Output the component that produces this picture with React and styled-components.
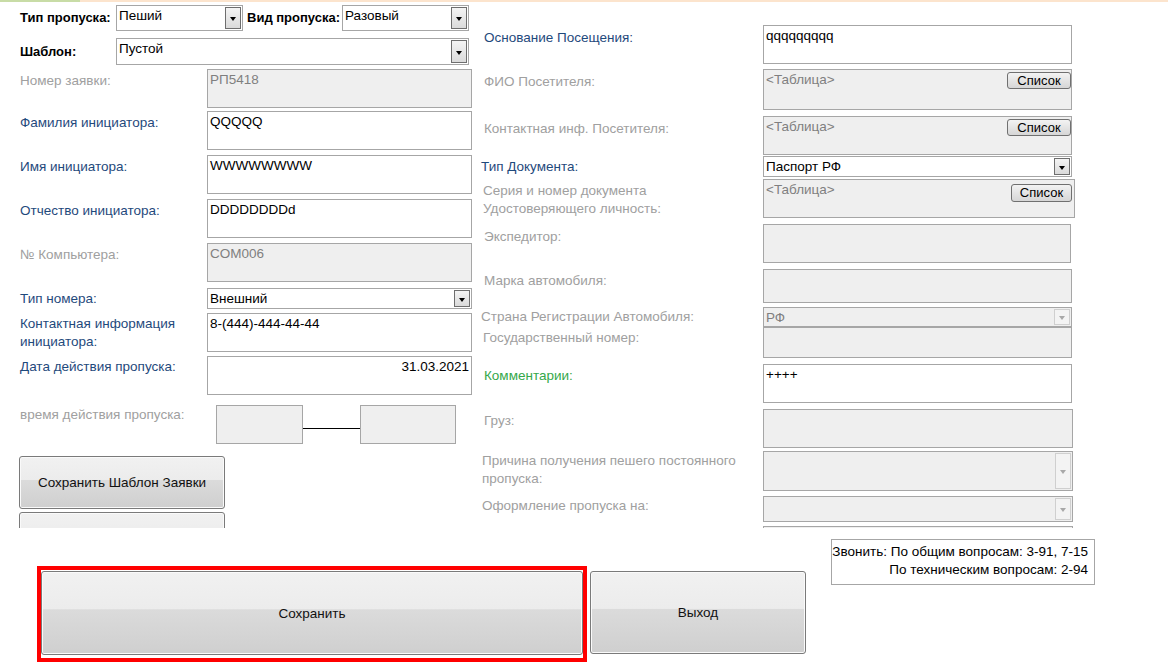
import React from 'react';
import styled, { createGlobalStyle, css } from 'styled-components';

const GlobalStyle = createGlobalStyle`
  body {
    margin: 0;
    background: #fff;
    font-family: "Liberation Sans", Arial, sans-serif;
    font-size: 13.5px;
    color: #000;
  }
`;

const tones = {
  strong: '#000',
  blue: '#1f4a7c',
  grey: '#a0a0a0',
  green: '#35a84a',
};

const Page = styled.div`
  width: 1168px;
  height: 669px;
  overflow: hidden;
`;

const TopStrip = styled.div`
  height: 2px;
  background: linear-gradient(to right, #c8dca6 0 80px, #fce4cd 80px);
`;

const Body = styled.div`
  display: grid;
  grid-template-columns: 452px 595px;
  column-gap: 9px;
  padding-left: 20px;
  height: 526px;
  overflow: hidden;
`;

const Column = styled.div`
  display: flex;
  flex-direction: column;
`;

const Row = styled.div`
  display: flex;
  align-items: flex-start;
  flex-shrink: 0;
  margin-top: ${(p) => p.$mt}px;
  height: ${(p) => p.$h}px;
`;

const Label = styled.div`
  width: ${(p) => p.$w}px;
  flex-shrink: 0;
  box-sizing: border-box;
  padding-left: ${(p) => p.$indent || 0}px;
  padding-top: ${(p) => (p.$center ? 0 : p.$pt ?? 3)}px;
  align-self: ${(p) => (p.$center ? 'center' : 'flex-start')};
  line-height: 18px;
  color: ${(p) => tones[p.$tone || 'grey']};
  font-weight: ${(p) => (p.$tone === 'strong' ? 'bold' : 'normal')};
  font-size: ${(p) => (p.$tone === 'strong' ? '13px' : 'inherit')};
  white-space: nowrap;
`;

const boxBase = css`
  box-sizing: border-box;
  height: 100%;
  border: 1px solid #a6a6a6;
  background: ${(p) => (p.$off ? '#efefef' : '#fff')};
  color: ${(p) => (p.$off ? '#7f7f7f' : '#000')};
  line-height: 16px;
`;

const Field = styled.div`
  ${boxBase};
  width: ${(p) => p.$w}px;
  padding: 2px 2px 0 2px;
  display: flex;
  justify-content: ${(p) => (p.$align === 'right' ? 'flex-end' : 'space-between')};
  align-items: flex-start;
`;

const ListButton = styled.div`
  box-sizing: border-box;
  width: ${(p) => p.$w || 64}px;
  height: ${(p) => p.$h || 17}px;
  margin-top: ${(p) => p.$mt || 0}px;
  margin-right: ${(p) => p.$mr ?? -2}px;
  border: 1px solid #707070;
  border-radius: 3px;
  background: linear-gradient(#f3f3f3, #e4e4e4 50%, #d6d6d6);
  color: #000;
  font-size: 13px;
  text-align: center;
  line-height: 15px;
`;

const Combo = styled.div`
  ${boxBase};
  width: ${(p) => p.$w}px;
  display: flex;
  justify-content: space-between;
  padding: 1px 1px 1px 2px;
`;

const ComboText = styled.span`
  padding-top: 1px;
  align-self: ${(p) => (p.$center ? 'center' : 'flex-start')};
`;

const ArrowButton = styled.div`
  box-sizing: border-box;
  width: 16px;
  height: 100%;
  border: 1px solid ${(p) => (p.$off ? '#cfcfcf' : '#6e6e6e')};
  background: ${(p) => (p.$off ? '#f3f3f3' : 'linear-gradient(#f4f4f4, #dadada)')};
  display: flex;
  align-items: center;
  justify-content: center;

  &::after {
    content: '';
    border-left: 3.5px solid transparent;
    border-right: 3.5px solid transparent;
    border-top: 4px solid ${(p) => (p.$off ? '#a8a8a8' : '#000')};
    margin-top: 2px;
  }
`;

const Gap = styled.div`
  width: ${(p) => p.$w}px;
  flex-shrink: 0;
`;

const TimeBox = styled.div`
  box-sizing: border-box;
  width: ${(p) => p.$w}px;
  height: 100%;
  border: 1px solid #a6a6a6;
  background: #efefef;
`;

const Connector = styled.div`
  width: 57px;
  height: 1px;
  margin-top: 23px;
  background: #000;
`;

const AccessButton = styled.div`
  box-sizing: border-box;
  width: ${(p) => p.$w}px;
  height: ${(p) => p.$h}px;
  margin-left: ${(p) => p.$ml || 0}px;
  border: 1px solid #7a7a7a;
  border-radius: 3px;
  background: linear-gradient(#f1f1f1 0%, #ececec 45%, #dbdbdb 46%, #cfcfcf 100%);
  box-shadow: inset 0 0 0 1px #fafafa;
  display: flex;
  align-items: center;
  justify-content: center;
  color: #111;
`;

const Footer = styled.div`
  display: flex;
  align-items: flex-start;
  padding-left: 37px;
`;

const Highlight = styled.div`
  box-sizing: border-box;
  width: 550px;
  height: 96px;
  margin-top: 38px;
  border: 4px solid #ff0000;
  padding: 1px 0 3px 0;
`;

const ExitSlot = styled.div`
  margin-top: 43px;
  margin-left: 3px;
`;

const InfoBox = styled.div`
  box-sizing: border-box;
  width: 264px;
  height: 46px;
  margin-top: 11px;
  margin-left: 25px;
  border: 1px solid #a6a6a6;
  padding: 3px 6px 0 0;
  text-align: right;
  line-height: 18px;
  white-space: nowrap;
`;

const LEFT_LABEL = 187;
const LEFT_BOX = 265;
const RIGHT_LABEL = 282;

const leftRows = [
  { mt: 4, h: 39, label: 'Номер заявки:', value: 'РП5418', off: true },
  { mt: 3, h: 39, label: 'Фамилия инициатора:', tone: 'blue', value: 'QQQQQ' },
  { mt: 5, h: 39, label: 'Имя инициатора:', tone: 'blue', value: 'WWWWWWWW' },
  { mt: 5, h: 39, label: 'Отчество инициатора:', tone: 'blue', value: 'DDDDDDDDd' },
  { mt: 5, h: 39, label: '№ Компьютера:', value: 'COM006', off: true },
];

const rightRows = [
  { mt: 23, h: 39, label: 'Основание Посещения:', tone: 'blue', value: 'qqqqqqqqq' },
  { mt: 5, h: 41, label: 'ФИО Посетителя:', value: '<Таблица>', off: true, list: true },
  { mt: 6, h: 39, label: 'Контактная инф. Посетителя:', value: '<Таблица>', off: true, list: true },
];

export default function App() {
  return (
    <Page>
      <GlobalStyle />
      <TopStrip />
      <Body>
        <Column>
          <Row $mt={3} $h={26}>
            <Label $w={96} $tone="strong" $pt={4}>Тип пропуска:</Label>
            <Combo $w={127}>
              <ComboText>Пеший</ComboText>
              <ArrowButton />
            </Combo>
            <Gap $w={4} />
            <Label $w={95} $tone="strong" $pt={4}>Вид пропуска:</Label>
            <Combo $w={127}>
              <ComboText>Разовый</ComboText>
              <ArrowButton />
            </Combo>
          </Row>
          <Row $mt={7} $h={27}>
            <Label $w={96} $tone="strong" $pt={5}>Шаблон:</Label>
            <Combo $w={353}>
              <ComboText>Пустой</ComboText>
              <ArrowButton />
            </Combo>
          </Row>

          {leftRows.map((r) => (
            <Row key={r.label} $mt={r.mt} $h={r.h}>
              <Label $w={LEFT_LABEL} $tone={r.tone}>{r.label}</Label>
              <Field $w={LEFT_BOX} $off={r.off}>{r.value}</Field>
            </Row>
          ))}

          <Row $mt={6} $h={21}>
            <Label $w={LEFT_LABEL} $tone="blue" $center>Тип номера:</Label>
            <Combo $w={LEFT_BOX}>
              <ComboText $center>Внешний</ComboText>
              <ArrowButton />
            </Combo>
          </Row>
          <Row $mt={4} $h={39}>
            <Label $w={LEFT_LABEL} $tone="blue" $pt={2}>
              Контактная информация
              <br />
              инициатора:
            </Label>
            <Field $w={LEFT_BOX}>8-(444)-444-44-44</Field>
          </Row>
          <Row $mt={4} $h={39}>
            <Label $w={LEFT_LABEL} $tone="blue" $pt={2}>Дата действия пропуска:</Label>
            <Field $w={LEFT_BOX} $align="right">31.03.2021</Field>
          </Row>
          <Row $mt={10} $h={39}>
            <Label $w={196} $pt={1}>время действия пропуска:</Label>
            <TimeBox $w={87} />
            <Connector />
            <TimeBox $w={96} />
          </Row>
          <Row $mt={12} $h={53}>
            <AccessButton $w={206} $h={53} $ml={-1}>Сохранить Шаблон Заявки</AccessButton>
          </Row>
          <Row $mt={3} $h={53}>
            <AccessButton $w={206} $h={53} $ml={-1} />
          </Row>
        </Column>

        <Column>
          {rightRows.map((r) => (
            <Row key={r.label} $mt={r.mt} $h={r.h}>
              <Label $w={RIGHT_LABEL} $tone={r.tone} $indent={3} $pt={4}>{r.label}</Label>
              <Field $w={309} $off={r.off}>
                <span>{r.value}</span>
                {r.list && <ListButton>Список</ListButton>}
              </Field>
            </Row>
          ))}
          <Row $mt={1} $h={21}>
            <Label $w={RIGHT_LABEL} $tone="blue" $center>Тип Документа:</Label>
            <Combo $w={309}>
              <ComboText $center>Паспорт РФ</ComboText>
              <ArrowButton />
            </Combo>
          </Row>
          <Row $mt={2} $h={39}>
            <Label $w={RIGHT_LABEL} $indent={2} $pt={3}>
              Серия и номер документа
              <br />
              Удостоверяющего личность:
            </Label>
            <Field $w={312} $off>
              <span>&lt;Таблица&gt;</span>
              <ListButton $w={61} $h={18} $mt={2} $mr={0}>Список</ListButton>
            </Field>
          </Row>
          <Row $mt={6} $h={39}>
            <Label $w={RIGHT_LABEL} $indent={3} $pt={4}>Экспедитор:</Label>
            <Field $w={308} $off />
          </Row>
          <Row $mt={6} $h={34}>
            <Label $w={RIGHT_LABEL} $indent={3} $pt={3}>Марка автомобиля:</Label>
            <Field $w={309} $off />
          </Row>
          <Row $mt={4} $h={20}>
            <Label $w={RIGHT_LABEL} $center>Страна Регистрации Автомобиля:</Label>
            <Combo $w={309} $off>
              <ComboText $center>РФ</ComboText>
              <ArrowButton $off />
            </Combo>
          </Row>
          <Row $mt={0} $h={31}>
            <Label $w={RIGHT_LABEL} $indent={2} $pt={2}>Государственный номер:</Label>
            <Field $w={309} $off />
          </Row>
          <Row $mt={6} $h={39}>
            <Label $w={RIGHT_LABEL} $tone="green" $indent={3} $pt={3}>Комментарии:</Label>
            <Field $w={309}>++++</Field>
          </Row>
          <Row $mt={6} $h={39}>
            <Label $w={RIGHT_LABEL} $indent={3} $pt={3}>Груз:</Label>
            <Field $w={310} $off />
          </Row>
          <Row $mt={3} $h={40}>
            <Label $w={RIGHT_LABEL} $indent={1} $pt={1}>
              Причина получения пешего постоянного
              <br />
              пропуска:
            </Label>
            <Combo $w={310} $off>
              <span />
              <ArrowButton $off />
            </Combo>
          </Row>
          <Row $mt={5} $h={26}>
            <Label $w={RIGHT_LABEL} $indent={1} $pt={1}>Оформление пропуска на:</Label>
            <Combo $w={310} $off>
              <span />
              <ArrowButton $off />
            </Combo>
          </Row>
          <Row $mt={4} $h={26}>
            <Gap $w={RIGHT_LABEL} />
            <Combo $w={310} $off>
              <span />
              <ArrowButton $off />
            </Combo>
          </Row>
        </Column>
      </Body>

      <Footer>
        <Highlight>
          <AccessButton $w={542} $h={84}>Сохранить</AccessButton>
        </Highlight>
        <ExitSlot>
          <AccessButton $w={216} $h={83}>Выход</AccessButton>
        </ExitSlot>
        <InfoBox>
          Звонить: По общим вопросам: 3-91, 7-15
          <br />
          По техническим вопросам: 2-94
        </InfoBox>
      </Footer>
    </Page>
  );
}
